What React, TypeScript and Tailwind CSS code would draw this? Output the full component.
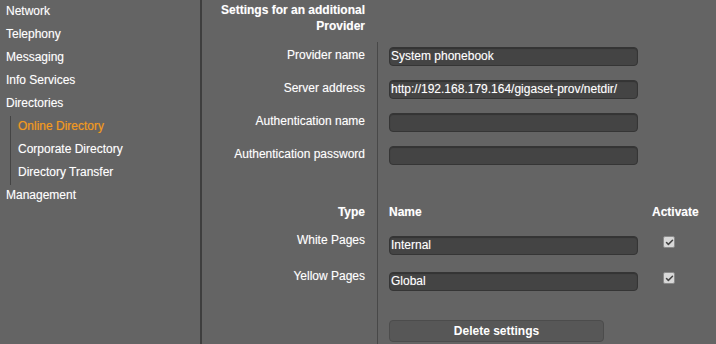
import { Check } from 'lucide-react';

const navTop = ['Network', 'Telephony', 'Messaging', 'Info Services', 'Directories'];
const navSub = [
  { label: 'Online Directory', active: true },
  { label: 'Corporate Directory', active: false },
  { label: 'Directory Transfer', active: false },
];

const fields = [
  { label: 'Provider name', value: 'System phonebook' },
  { label: 'Server address', value: 'http://192.168.179.164/gigaset-prov/netdir/' },
  { label: 'Authentication name', value: '' },
  { label: 'Authentication password', value: '' },
];

const types = [
  { label: 'White Pages', value: 'Internal' },
  { label: 'Yellow Pages', value: 'Global' },
];

function TextBox({ value }: { value: string }) {
  return (
    <div className="w-[249px] h-[19px] rounded-[4px] border border-[#353535] bg-[#444444] shadow-[inset_0_1px_1px_rgba(0,0,0,0.25)] pl-[1px] leading-[17px] text-white whitespace-nowrap overflow-hidden">
      {value}
    </div>
  );
}

function CheckBox() {
  return (
    <span className="flex items-center justify-center w-[12px] h-[12px] rounded-[2px] border border-[#8a8a8a] bg-[#d8d8d8]">
      <Check className="w-[9px] h-[9px] text-[#444444]" strokeWidth={4} />
    </span>
  );
}

export default function App() {
  return (
    <div className="flex w-[716px] h-[344px] bg-[#646464] text-white text-[12px] font-['Liberation_Sans',Arial,sans-serif] [text-shadow:0_0_1px_rgba(255,255,255,0.35)] overflow-hidden">
      <nav className="w-[202px] shrink-0 pt-[1px] border-r-2 border-[#3e3e3e]">
        {navTop.map((item) => (
          <div key={item} className="h-[23px] leading-[21px] pl-[6px]">
            {item}
          </div>
        ))}
        <div className="ml-[10px] border-l border-[#444444] pl-[7px]">
          {navSub.map((item) => (
            <div
              key={item.label}
              className={
                item.active
                  ? 'h-[23px] leading-[21px] text-[#f39a21] [text-shadow:0_0_1px_rgba(243,154,33,0.5)]'
                  : 'h-[23px] leading-[21px]'
              }
            >
              {item.label}
            </div>
          ))}
        </div>
        <div className="h-[23px] leading-[21px] pl-[6px]">Management</div>
      </nav>

      <main className="flex-1 flex flex-col">
        <div className="h-[42px] w-[175px] pt-[2px] pr-[12px] text-right font-bold leading-[16px]">
          Settings for an additional Provider
        </div>
        <div className="flex flex-1">
          <div className="w-[175px] pr-[12px] text-right leading-[16px]">
            {fields.map((f) => (
              <div key={f.label} className="h-[33px] pt-[5px]">
                {f.label}
              </div>
            ))}
            <div className="h-[24px]" />
            <div className="h-[30px] pt-[6px] font-bold">Type</div>
            {types.map((t) => (
              <div key={t.label} className="h-[36px] pt-[4px]">
                {t.label}
              </div>
            ))}
          </div>

          <div className="flex-1 border-l border-[#484848] pl-[11px]">
            {fields.map((f) => (
              <div key={f.label} className="h-[33px] pt-[5px]">
                <TextBox value={f.value} />
              </div>
            ))}
            <div className="h-[24px]" />
            <div className="h-[30px] pt-[6px] flex font-bold leading-[16px]">
              <span className="w-[263px]">Name</span>
              <span>Activate</span>
            </div>
            {types.map((t) => (
              <div key={t.label} className="h-[36px] flex items-start">
                <div className="mt-[8px]">
                  <TextBox value={t.value} />
                </div>
                <div className="ml-[25px] mt-[8px]">
                  <CheckBox />
                </div>
              </div>
            ))}
            <button className="mt-[20px] w-[215px] h-[22px] rounded-[4px] border border-[#4c4c4c] bg-[#575757] font-bold text-white leading-[20px]">
              Delete settings
            </button>
          </div>
        </div>
      </main>
    </div>
  );
}
